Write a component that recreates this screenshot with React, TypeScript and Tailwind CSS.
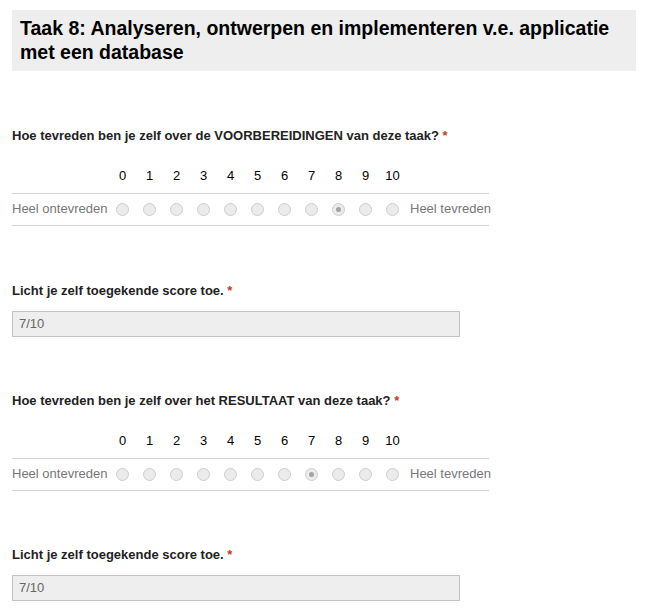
import React from "react";

const scale = [0, 1, 2, 3, 4, 5, 6, 7, 8, 9, 10];

function Radio({ checked }: { checked?: boolean }) {
  return (
    <span className="flex h-[13px] w-[13px] items-center justify-center rounded-full border border-[#cdcdcd] bg-[#ebebeb]">
      {checked && <span className="h-[5px] w-[5px] rounded-full bg-[#a3a3a3]" />}
    </span>
  );
}

function Required() {
  return <span className="text-[#c43b1d]"> *</span>;
}

function ScaleQuestion({ title, picked }: { title: React.ReactNode; picked: number }) {
  return (
    <div>
      <div className="h-4 text-[13px] font-bold leading-4 text-[#222]">{title}</div>
      <div className="mt-[17px] w-[477px]">
        <div className="flex h-8 items-center pb-[3px] text-[13px] text-black">
          <div className="w-[97px] shrink-0" />
          {scale.map((n) => (
            <div key={n} className="w-[27px] shrink-0 text-center">
              {n}
            </div>
          ))}
        </div>
        <div className="flex h-[33px] items-center whitespace-nowrap border-y border-[#d3d3d3] text-[13px] text-[#777]">
          <div className="w-[97px] shrink-0 pb-px">Heel ontevreden</div>
          {scale.map((n) => (
            <div key={n} className="flex w-[27px] shrink-0 justify-center">
              <Radio checked={n === picked} />
            </div>
          ))}
          <div className="pb-px pl-1">Heel tevreden</div>
        </div>
      </div>
    </div>
  );
}

function ScoreField({ value }: { value: string }) {
  return (
    <div>
      <div className="h-4 text-[13px] font-bold leading-4 text-[#222]">
        Licht je zelf toegekende score toe.
        <Required />
      </div>
      <div className="mt-3 flex h-[26px] w-[448px] items-center border border-[#c4c4c4] bg-[#eeeeee] px-[6px] text-[13px] text-[#666]">
        {value}
      </div>
    </div>
  );
}

export default function App() {
  return (
    <div className="min-h-[610px] bg-white px-3 pt-[10px] font-['Liberation_Sans',Arial,sans-serif]">
      {/* Section header */}
      <div className="w-[624px] bg-[#eeeeee] px-2 pb-[7px] pt-[6px]">
        <h1 className="text-[19.5px] font-bold leading-6 text-black">
          Taak 8: Analyseren, ontwerpen en implementeren v.e. applicatie met een database
        </h1>
      </div>

      <div className="mt-[57px]">
        <ScaleQuestion
          title={
            <>
              Hoe tevreden ben je zelf over de VOORBEREIDINGEN van deze taak?
              <Required />
            </>
          }
          picked={8}
        />
      </div>

      <div className="mt-[57px]">
        <ScoreField value="7/10" />
      </div>

      <div className="mt-[56px]">
        <ScaleQuestion
          title={
            <>
              Hoe tevreden ben je zelf over het RESULTAAT van deze taak?
              <Required />
            </>
          }
          picked={7}
        />
      </div>

      <div className="mt-[56px]">
        <ScoreField value="7/10" />
      </div>
    </div>
  );
}
